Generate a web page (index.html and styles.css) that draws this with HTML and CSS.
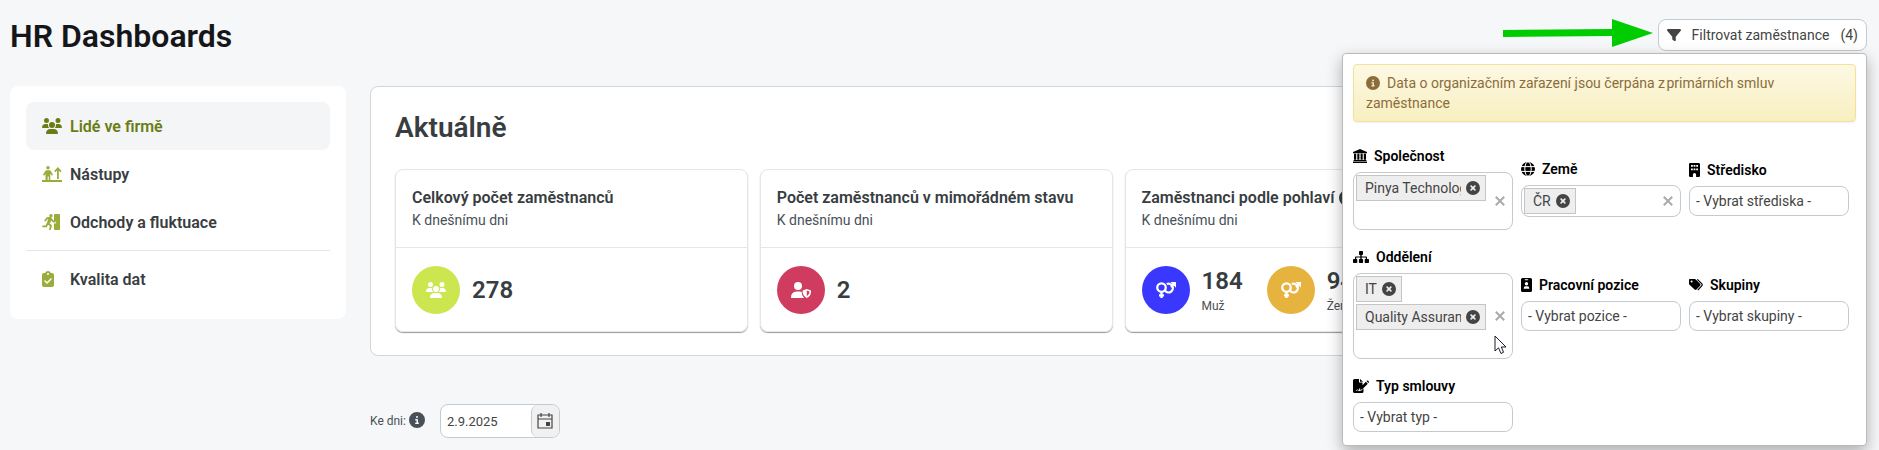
FILE: index.html
```
<!DOCTYPE html>
<html lang="cs">
<head>
  <meta charset="utf-8">
  <title>HR Dashboards</title>
  <link rel="stylesheet" href="styles.css">
</head>

<body>
<!-- shared icons -->
<svg class="sprite" width="0" height="0">
  <symbol id="i-users" viewBox="0 0 640 512"><path d="M144 0a80 80 0 1 1 0 160A80 80 0 1 1 144 0zM512 0a80 80 0 1 1 0 160A80 80 0 1 1 512 0zM0 298.7C0 239.8 47.8 192 106.7 192h42.7c15.9 0 31 3.5 44.6 9.7c-1.3 7.2-1.9 14.7-1.9 22.3c0 38.2 16.8 72.5 43.3 96H21.3C9.6 320 0 310.4 0 298.7zM405.3 320h-.7c26.6-23.5 43.3-57.8 43.3-96c0-7.6-.7-15-1.9-22.3c13.6-6.3 28.7-9.7 44.6-9.7h42.7C592.2 192 640 239.8 640 298.7c0 11.8-9.6 21.3-21.3 21.3H405.3zM224 224a96 96 0 1 1 192 0 96 96 0 1 1 -192 0zM128 485.3C128 411.7 187.7 352 261.3 352H378.7C452.3 352 512 411.7 512 485.3c0 14.7-11.9 26.7-26.7 26.7H154.7c-14.7 0-26.7-11.9-26.7-26.7z"/></symbol>
  <symbol id="i-info" viewBox="0 0 512 512"><path d="M256 512A256 256 0 1 0 256 0a256 256 0 1 0 0 512zM216 336h24V272H216c-13.3 0-24-10.7-24-24s10.7-24 24-24h48c13.3 0 24 10.7 24 24v88h8c13.3 0 24 10.7 24 24s-10.7 24-24 24H216c-13.3 0-24-10.7-24-24s10.7-24 24-24zm40-208a32 32 0 1 1 0 64 32 32 0 1 1 0-64z"/></symbol>
  <symbol id="i-remove" viewBox="0 0 512 512"><path d="M256 512A256 256 0 1 0 256 0a256 256 0 1 0 0 512zM165 165c12-12 31-12 43 0l48 48 48-48c12-12 31-12 43 0s12 31 0 43l-48 48 48 48c12 12 12 31 0 43s-31 12-43 0l-48-48-48 48c-12 12-31 12-43 0s-12-31 0-43l48-48-48-48c-12-12-12-31 0-43z"/></symbol>
  <symbol id="i-clear" viewBox="0 0 10 10"><path d="M.8.800l8.400 8.400M9.200.800l-8.400 8.400" fill="none" stroke="currentColor" stroke-width="2"/></symbol>
  <symbol id="i-gender" viewBox="0 0 640 512"><g fill="none" stroke="currentColor" stroke-width="72"><circle cx="176" cy="176" r="136"/><path d="M176 320v190M96 424h160M345 66A140 140 0 1 1 290 282M480 170L590 60"/></g><path d="M460 0h172q8 0 8 8v172L580 120 520 60z"/></symbol>
</svg>

<div class="page">
  <div class="header">
    <h1 class="title">HR Dashboards</h1>
    <svg class="arrow" viewBox="0 0 150 28"><path d="M0 11L109 10V0L150 14L109 28V17L0 18z"/></svg>
    <button class="filter-btn">
      <svg class="filter-icon" viewBox="0 0 512 512"><path d="M3.9 54.9C10.5 40.9 24.5 32 40 32H472c15.5 0 29.5 8.9 36.1 22.9s4.6 30.5-5.2 42.5L320 320.9V448c0 12.1-6.8 23.2-17.7 28.6s-23.8 4.3-33.5-3l-64-48c-8.1-6-12.8-15.5-12.8-25.6V320.9L9 97.3C-.7 85.4-2.8 68.8 3.9 54.9z"/></svg>
      <span>Filtrovat zaměstnance</span>
      <span>(4)</span>
    </button>

    <!-- filter popup -->
    <div class="popup">
      <div class="alert"><svg class="alert-icon"><use href="#i-info"/></svg>Data o organizačním zařazení jsou čerpána z&#8202;primárních smluv zaměstnance</div>
      <div class="fields">
        <div class="field">
          <label class="field-label" for="company"><svg class="field-icon" viewBox="0 0 14 14"><path d="M7 0l7 3v1.300H0V3zM1 4.800h2.200v6H1zM4.300 4.800h2.100v6H4.300zM7.600 4.800h2.100v6H7.600zM10.800 4.800H13v6h-2.200zM.6 11h12.800v1.100H.6zM0 12.500h14V14H0z"/></svg>Společnost</label>
          <div class="multi">
            <div class="chips">
              <span class="chip"><span class="chip-text">Pinya Technologies</span><button class="chip-x" aria-label="Odebrat"><svg><use href="#i-remove"/></svg></button></span>
              <input class="search" id="company" type="text">
            </div>
            <button class="clear" aria-label="Vymazat"><svg><use href="#i-clear"/></svg></button>
          </div>
        </div>
        <div class="field">
          <label class="field-label" for="country"><svg class="field-icon" viewBox="0 0 14 14"><circle cx="7" cy="7" r="7"/><g fill="none" stroke="#fff"><ellipse cx="7" cy="7" rx="3.200" ry="7.200"/><path d="M0 4.600h14M0 9.400h14"/></g></svg>Země</label>
          <div class="multi">
            <div class="chips">
              <span class="chip"><span class="chip-text">ČR</span><button class="chip-x" aria-label="Odebrat"><svg><use href="#i-remove"/></svg></button></span>
              <input class="search" id="country" type="text">
            </div>
            <button class="clear" aria-label="Vymazat"><svg><use href="#i-clear"/></svg></button>
          </div>
        </div>
        <div class="field">
          <label class="field-label" for="center"><svg class="field-icon narrow" viewBox="0 0 11 14"><path fill-rule="evenodd" d="M1.300 0h8.400Q11 0 11 1.300v11.400Q11 14 9.700 14H7.100v-2.300a1.600 1.600 0 0 0-3.200 0V14H1.300Q0 14 0 12.700V1.300Q0 0 1.300 0zM2 2v1.800h1.800V2zM4.600 2v1.800h1.800V2zM7.200 2v1.800H9V2zM2 5.500v1.800h1.800V5.500zM4.600 5.500v1.800h1.800V5.500zM7.200 5.500v1.800H9V5.500z"/></svg>Středisko</label>
          <select class="select" id="center"><option>- Vybrat střediska -</option></select>
        </div>

        <div class="field">
          <label class="field-label" for="department"><svg class="field-icon wide" viewBox="0 0 16 14"><path d="M6.800 1h2.400q.8 0 .8.8v2.400q0 .8-.8.8h-.5v1.400H13q1 0 1 1V9h1.200q.8 0 .8.800v2.400q0 .8-.8.800h-2.700q-.8 0-.8-.8V9.800q0-.8.8-.8h.3V7.600H8.700V9h.6q.8 0 .8.8v2.400q0 .8-.8.8H6.700q-.8 0-.8-.8V9.800q0-.8.8-.8h.6V7.600H3.200V9h.3q.8 0 .8.8v2.400q0 .8-.8.8H.8Q0 13 0 12.200V9.800Q0 9 .8 9H2V7.400q0-1 1-1h4.300V5h-.5Q6 5 6 4.200V1.800Q6 1 6.800 1z"/></svg>Oddělení</label>
          <div class="multi">
            <div class="chips">
              <span class="chip"><span class="chip-text">IT</span><button class="chip-x" aria-label="Odebrat"><svg><use href="#i-remove"/></svg></button></span>
              <span class="chip"><span class="chip-text">Quality Assurance</span><button class="chip-x" aria-label="Odebrat"><svg><use href="#i-remove"/></svg></button></span>
              <input class="search full" id="department" type="text">
            </div>
            <button class="clear" aria-label="Vymazat"><svg><use href="#i-clear"/></svg></button>
          </div>
        </div>
        <div class="field">
          <label class="field-label" for="position"><svg class="field-icon narrow" viewBox="0 0 11 14"><path fill-rule="evenodd" d="M1.500 0h8Q11 0 11 1.500v11Q11 14 9.500 14h-8Q0 14 0 12.500v-11Q0 0 1.500 0zM3.800 1.300v1h3.400v-1zM5.500 4a1.700 1.700 0 1 0 0 3.400 1.700 1.700 0 1 0 0-3.400zM4.800 8.300Q2.600 8.300 2.600 10.700h5.800Q8.400 8.300 6.200 8.300z"/></svg>Pracovní pozice</label>
          <select class="select" id="position"><option>- Vybrat pozice -</option></select>
        </div>
        <div class="field">
          <label class="field-label" for="groups"><svg class="field-icon" viewBox="0 0 14 14"><path fill-rule="evenodd" d="M0 1.800Q0 1 .8 1h4.800q.7 0 1.200.5l4.300 4.300q.9.900 0 1.900L7.500 11.500q-1 .9-1.900 0L.5 6.700Q0 6.200 0 5.500zM2.600 2.600a1 1 0 1 0 0 2 1 1 0 1 0 0-2z"/><path d="M8.300 1.300l4.400 4.400q1 1.100 0 2.200l-3.900 4.300" fill="none" stroke="#000" stroke-width="1.200"/></svg>Skupiny</label>
          <select class="select" id="groups"><option>- Vybrat skupiny -</option></select>
        </div>

        <div class="field">
          <label class="field-label" for="contract"><svg class="field-icon wide" viewBox="0 0 16 14"><path d="M1.500 0H6v3.500h3.500v3L6 10l-.5 1.700-1-1.500-1.700 1.600.8.200 1.100-1 .8 1.200 3-.7 2-1.900V12.500Q10.500 14 9 14H1.500Q0 14 0 12.500v-11Q0 0 1.500 0zM7 0l3 2.700H7zM12.800 2.800l2 1.900-5.500 5.600-2.600.7.700-2.500zM13.500 2.100l.6-.5q.5-.3 1 .1l.7.700q.4.500 0 1l-.5.600z"/></svg>Typ smlouvy</label>
          <select class="select" id="contract"><option>- Vybrat typ -</option></select>
        </div>
      </div>
      <svg class="cursor" viewBox="0 0 13 20"><path d="M1 1v15l3.500-3.200L7 18.500l2.600-1.200L7.300 12H12z" fill="#fff" stroke="#1b1b2b"/></svg>
    </div>
  </div>

  <div class="content">
    <ul class="menu">
      <li><a class="menu-item active" href="#"><span class="menu-icon"><svg width="20" height="16"><use href="#i-users"/></svg></span>Lidé ve firmě</a></li>
      <li><a class="menu-item" href="#"><span class="menu-icon"><svg width="20" height="16" viewBox="0 0 20 16"><circle cx="6" cy="1.800" r="1.700"/><path d="M0 14h20v2H0zM4.700 4.200h2.800q.8 0 1.300.8l2.200 3.700-1.300.9-1.400-2V14H6.700v-3.500h-1V14H3.500V7.800l-1.300 1.900-1.300-.9L3.300 5q.5-.8 1.400-.8zM15.900 1l3.700 4-1.200 1.200-1.600-1.700V13h-1.800V4.500l-1.600 1.700L12.200 5z"/></svg></span>Nástupy</a></li>
      <li><a class="menu-item" href="#"><span class="menu-icon"><svg width="18" height="16" viewBox="0 0 18 16"><path fill-rule="evenodd" d="M13 0h4q1 0 1 1v14q0 1-1 1h-4q-1 0-1-1V9.500h1.300q1-.3 1-1.300T13 7h-1V1q0-1 1-1z"/><circle cx="9" cy="1.700" r="1.700"/><path d="M3.300 6.500L5 4.300Q5.300 4 6 4h2.500l2 2.700 1.200.9h1.200M8.300 5L6 9.300l3 2.400-1 3.500M5.600 9.500L4.200 12.300H1" fill="none" stroke="currentColor" stroke-width="1.800" stroke-linecap="round" stroke-linejoin="round"/><path d="M6 5l3.500.5L8 9.500 5 9z"/></svg></span>Odchody a fluktuace</a></li>
      <li class="menu-line"></li>
      <li><a class="menu-item" href="#"><span class="menu-icon"><svg width="12" height="16" viewBox="0 0 384 512"><path d="M192 0c-41.800 0-77.400 26.700-90.500 64H64C28.700 64 0 92.700 0 128V448c0 35.300 28.700 64 64 64H320c35.300 0 64-28.700 64-64V128c0-35.300-28.700-64-64-64H282.500C269.400 26.700 233.800 0 192 0zm0 64a32 32 0 1 1 0 64 32 32 0 1 1 0-64zM305 273L177 401c-9.400 9.400-24.600 9.400-33.900 0L79 337c-9.400-9.400-9.400-24.600 0-33.900s24.600-9.400 33.900 0l47 47L271 239c9.400-9.400 24.600-9.400 33.900 0s9.400 24.600 0 33.900z"/></svg></span>Kvalita dat</a></li>
    </ul>

    <div class="main">
      <div class="panel">
        <h2 class="panel-title">Aktuálně</h2>
        <div class="cards">
          <div class="card">
            <div class="card-head">
              <h3 class="card-title">Celkový počet zaměstnanců</h3>
              <p class="card-sub">K dnešnímu dni</p>
            </div>
            <div class="card-body">
              <div class="stat">
                <span class="circle lime"><svg width="20" height="16"><use href="#i-users"/></svg></span>
                <div class="value">278</div>
              </div>
            </div>
          </div>
          <div class="card">
            <div class="card-head">
              <h3 class="card-title">Počet zaměstnanců v mimořádném stavu</h3>
              <p class="card-sub">K dnešnímu dni</p>
            </div>
            <div class="card-body">
              <div class="stat">
                <span class="circle red"><svg width="20" height="16" viewBox="0 0 20 16"><circle cx="7" cy="4" r="4"/><path d="M5.500 9.500h3q1.300 0 2.200.4-.1 3.800 2.300 6.100H.6Q0 16 0 15.400q0-5.500 5.500-5.900z"/><path fill-rule="evenodd" d="M15.800 7l4.200 1.600q.3 5.400-4.200 7.400-4.500-2-4.200-7.400zM15.800 8.600v5.700q2.700-1.500 2.700-4.700z"/></svg></span>
                <div class="value">2</div>
              </div>
            </div>
          </div>
          <div class="card">
            <div class="card-head">
              <h3 class="card-title">Zaměstnanci podle pohlaví <svg class="info"><use href="#i-info"/></svg></h3>
              <p class="card-sub">K dnešnímu dni</p>
            </div>
            <div class="card-body">
              <div class="stat">
                <span class="circle blue"><svg width="20" height="16"><use href="#i-gender"/></svg></span>
                <div>
                  <div class="value">184</div>
                  <div class="value-label">Muž</div>
                </div>
              </div>
              <div class="stat">
                <span class="circle gold"><svg width="20" height="16"><use href="#i-gender"/></svg></span>
                <div>
                  <div class="value">94</div>
                  <div class="value-label">Žena</div>
                </div>
              </div>
            </div>
          </div>
        </div>
      </div>

      <div class="date-row">
        <label class="date-label" for="date">Ke dni: <svg class="info"><use href="#i-info"/></svg></label>
        <div class="date-box">
          <input class="date-input" id="date" type="text" value="2.9.2025">
          <button class="date-btn" aria-label="Kalendář"><svg width="16" height="16" viewBox="0 0 16 16"><path d="M1 2h14v13H1zM1 6h14M4 0v4M12 0v4M3 2h2M11 2h2" fill="none" stroke="#444" stroke-width="1.200"/><path d="M9 9h4v4H9z"/></svg></button>
        </div>
      </div>
    </div>
  </div>
</div>
</body>

</html>
```
FILE: styles.css
```
* {
  box-sizing: border-box;
}
body {
  margin: 0;
  background: #f5f7f9;
  color: #383d41;
  font-family: Roboto, "Open Sans", sans-serif;
  font-size: 14px;
  line-height: 21px;
}
svg {
  fill: currentColor;
}
h1, h2, h3, p, ul {
  margin: 0;
  padding: 0;
}
button, input, select {
  font-family: inherit;
  font-size: 14px;
  color: #444;
}
button {
  cursor: pointer;
}
.sprite {
  position: absolute;
}
.page {
  min-height: 100vh;
  padding: 16px 12px 0 10px;
}

/* header */
.header {
  position: relative;
  display: flex;
  align-items: flex-start;
  height: 70px;
}
.title {
  flex: 1;
  color: #16161a;
  font-size: 32px;
  line-height: 40px;
  font-weight: 600;
}
.arrow {
  width: 150px;
  height: 28px;
  margin: 3px 5px 0 0;
  fill: #00cc00;
}
.filter-btn {
  display: flex;
  align-items: center;
  gap: 11px;
  height: 32px;
  margin-top: 3px;
  padding: 0 8px;
  background: #fff;
  border: 1px solid #c3cbd0;
  border-radius: 8px;
}
.filter-icon {
  width: 14px;
  height: 14px;
}

/* filter popup */
.popup {
  position: absolute;
  top: 37px;
  right: 0;
  z-index: 10;
  width: 525px;
  padding: 10px 10px 13px;
  background: #fff;
  border: 1px solid #bbb;
  border-radius: 4px;
  box-shadow: 0 6px 16px rgba(0, 0, 0, .3);
}
.alert {
  padding: 8px 12px;
  background: linear-gradient(#fdf8e4, #f8efc0);
  border: 1px solid #f3e19a;
  border-radius: 4px;
  box-shadow: 0 1px 2px rgba(0, 0, 0, .06);
  color: #8a6d3b;
  line-height: 20px;
}
.alert-icon {
  width: 14px;
  height: 14px;
  margin-right: 7px;
  vertical-align: -2px;
}
.fields {
  display: grid;
  grid-template-columns: repeat(3, 160px);
  align-items: center;
  gap: 15px 8px;
  margin-top: 22px;
}
.field-label {
  display: flex;
  align-items: center;
  gap: 7px;
  height: 24px;
  margin-bottom: 4px;
  color: #000;
  font-weight: 600;
}
.field-icon {
  width: 14px;
  height: 14px;
}
.field-icon.narrow {
  width: 11px;
}
.field-icon.wide {
  width: 16px;
}
.multi {
  display: flex;
  align-items: center;
  padding: 2px;
  border: 1px solid #c3cbd0;
  border-radius: 8px;
}
.chips {
  flex: 1;
  min-width: 0;
  display: flex;
  flex-wrap: wrap;
  gap: 2px;
}
.chip {
  display: flex;
  align-items: center;
  gap: 5px;
  height: 26px;
  max-width: 130px;
  padding: 0 5px 0 8px;
  background: #eee;
  border: 1px solid #c5c5c5;
  color: #444;
}
.chip-text {
  overflow: hidden;
  white-space: nowrap;
}
.chip-x, .clear {
  display: flex;
  flex-shrink: 0;
  padding: 0;
  background: none;
  border: 0;
}
.chip-x svg {
  width: 14px;
  height: 14px;
}
.clear {
  margin: 0 5px 0 8px;
  color: #aaa;
}
.clear svg {
  width: 10px;
  height: 10px;
}
.search {
  flex: 1 1 60px;
  width: 60px;
  height: 24px;
  padding: 0;
  background: none;
  border: 0;
  outline: 0;
}
.search.full {
  flex-basis: 100%;
}
.select {
  appearance: none;
  display: block;
  width: 100%;
  height: 30px;
  padding: 0 6px;
  background: #fff;
  border: 1px solid #c3cbd0;
  border-radius: 8px;
}
.cursor {
  position: absolute;
  top: 281px;
  left: 151px;
  width: 13px;
  height: 20px;
}

/* layout */
.content {
  display: flex;
  align-items: flex-start;
  gap: 24px;
}
.main {
  flex: 1;
}

/* left menu */
.menu {
  width: 336px;
  padding: 16px;
  background: #fff;
  border-radius: 8px;
  list-style: none;
}
.menu-item {
  display: flex;
  align-items: center;
  height: 48px;
  padding: 0 16px;
  border-radius: 8px;
  color: #383d41;
  font-size: 16px;
  font-weight: 600;
  text-decoration: none;
}
.menu-item.active {
  background: #f4f5f7;
  color: #6a7d14;
}
.menu-icon {
  display: flex;
  width: 28px;
  color: #9aac3a;
}
.active .menu-icon {
  color: #6a7d14;
}
.menu-line {
  margin: 4px 0;
  border-top: 1px solid #e4e6e8;
}

/* panel with cards */
.panel {
  padding: 24px 24px 23px;
  background: #fff;
  border: 1px solid #d0d6da;
  border-radius: 8px;
}
.panel-title {
  margin-bottom: 24px;
  font-size: 28px;
  line-height: 34px;
  font-weight: 600;
}
.cards {
  display: grid;
  grid-template-columns: repeat(4, 1fr);
  gap: 12px;
}
.card {
  border: 1px solid #e4e6e8;
  border-radius: 8px;
  box-shadow: 0 1px 1px rgba(0, 0, 0, .4);
}
.card-head {
  padding: 16px;
  border-bottom: 1px solid #e4e6e8;
}
.card-title {
  font-size: 16px;
  line-height: 24px;
  font-weight: 600;
  white-space: nowrap;
}
.card-sub {
  color: #495057;
}
.card-body {
  display: flex;
  gap: 24px;
  padding: 16px;
}
.stat {
  display: flex;
  align-items: center;
  gap: 12px;
  height: 51px;
}
.circle {
  display: flex;
  align-items: center;
  justify-content: center;
  width: 48px;
  height: 48px;
  border-radius: 50%;
  color: #fff;
}
.lime {
  background: #cbe64f;
}
.red {
  background: #d03c5f;
}
.blue {
  background: #3a38ff;
}
.gold {
  background: #e6b33f;
}
.value {
  font-size: 24px;
  line-height: 32px;
  font-weight: 600;
}
.value-label {
  color: #495057;
  font-size: 12px;
  line-height: 18px;
}
.info {
  width: 16px;
  height: 16px;
  vertical-align: -3px;
}

/* date */
.date-row {
  display: flex;
  align-items: center;
  gap: 15px;
  margin-top: 48px;
}
.date-label {
  color: #495057;
  font-size: 12px;
}
.date-box {
  display: flex;
  width: 120px;
  height: 34px;
  background: #fff;
  border: 1px solid #c3cbd0;
  border-radius: 8px;
}
.date-input {
  flex: 1;
  min-width: 0;
  padding: 0 6px;
  background: none;
  border: 0;
  font-size: 13px;
}
.date-btn {
  display: flex;
  align-items: center;
  justify-content: center;
  width: 28px;
  padding: 0;
  background: #f1f1f1;
  border: 0;
  border-left: 1px solid #c3cbd0;
  border-radius: 7px;
}
```
